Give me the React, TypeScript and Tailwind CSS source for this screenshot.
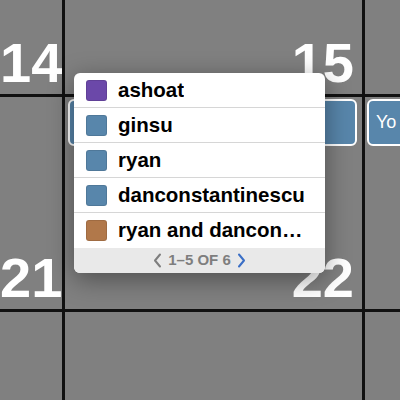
import type { ReactNode } from "react";

interface Thread {
  name: string;
  color: string;
}

const threads: Thread[] = [
  { name: "ashoat", color: "bg-[#6b48a9]" },
  { name: "ginsu", color: "bg-[#5886ab]" },
  { name: "ryan", color: "bg-[#5886ab]" },
  { name: "danconstantinescu", color: "bg-[#5886ab]" },
  { name: "ryan and danconstantinescu", color: "bg-[#b1784a]" },
];

function Cell({ children, className }: { children?: ReactNode; className?: string }) {
  return (
    <div className={"flex min-h-0 min-w-0 flex-col overflow-hidden bg-[#808080] " + (className ?? "")}>
      {children}
    </div>
  );
}

function DayNumber({ day }: { day: number }) {
  return (
    <div className="mt-auto whitespace-nowrap pb-[3px] pr-[8px] text-right text-[56px] font-bold leading-none text-white">
      {day}
    </div>
  );
}

function EventPill({ label, className }: { label?: string; className?: string }) {
  return (
    <div
      className={
        "flex h-[47px] shrink-0 items-center overflow-hidden whitespace-nowrap rounded-[6px] border-2 border-white bg-[#5886ab] pl-[7px] text-[18px] text-white " +
        (className ?? "")
      }
    >
      {label}
    </div>
  );
}

function Chevron({ dir, className }: { dir: "left" | "right"; className?: string }) {
  return (
    <svg width="9" height="15" viewBox="0 0 9 15" className={className} fill="none">
      <polyline
        points={dir === "left" ? "7,1.5 2,7.5 7,13.5" : "2,1.5 7,7.5 2,13.5"}
        stroke="currentColor"
        strokeWidth="2"
        strokeLinecap="round"
        strokeLinejoin="round"
      />
    </svg>
  );
}

function ThreadPicker() {
  return (
    <div className="absolute left-[74px] top-[73px] w-[251px] overflow-hidden rounded-[6px] bg-white shadow-[0_6px_26px_rgba(0,0,0,0.4)]">
      {threads.map((t, i) => (
        <div
          key={t.name}
          className={
            "flex h-[35px] items-center pl-[12px] pr-[12px] " +
            (i < threads.length - 1 ? "border-b border-[#d6d6d6]" : "")
          }
        >
          <div className={"size-[21px] shrink-0 rounded-[3px] border border-black/10 " + t.color} />
          <div className="ml-[11px] min-w-0 truncate text-[20.5px] font-bold text-black">{t.name}</div>
        </div>
      ))}
      <div className="flex h-[25px] items-center justify-center gap-[6px] bg-[#e9e9e9] text-[15px] font-bold text-[#7e7e7e]">
        <Chevron dir="left" className="text-[#7e7e7e]" />
        <span>1–5 OF 6</span>
        <Chevron dir="right" className="text-[#3b6fc6]" />
      </div>
    </div>
  );
}

export default function App() {
  return (
    <div
      className="relative h-[400px] w-[400px] overflow-hidden"
      style={{ fontFamily: '"Liberation Sans", Arial, sans-serif' }}
    >
      <div className="grid h-full w-full grid-cols-[62px_297px_1fr] grid-rows-[94px_212px_1fr] gap-[3px] bg-[#111]">
        <Cell>
          <DayNumber day={14} />
        </Cell>
        <Cell>
          <DayNumber day={15} />
        </Cell>
        <Cell />

        <Cell>
          <DayNumber day={21} />
        </Cell>
        <Cell>
          <EventPill className="ml-[3px] mr-[5px] mt-[2px]" />
          <DayNumber day={22} />
        </Cell>
        <Cell>
          <EventPill label="Yo" className="-mr-[20px] ml-[2px] mt-[2px]" />
        </Cell>

        <Cell />
        <Cell />
        <Cell />
      </div>
      <ThreadPicker />
    </div>
  );
}
